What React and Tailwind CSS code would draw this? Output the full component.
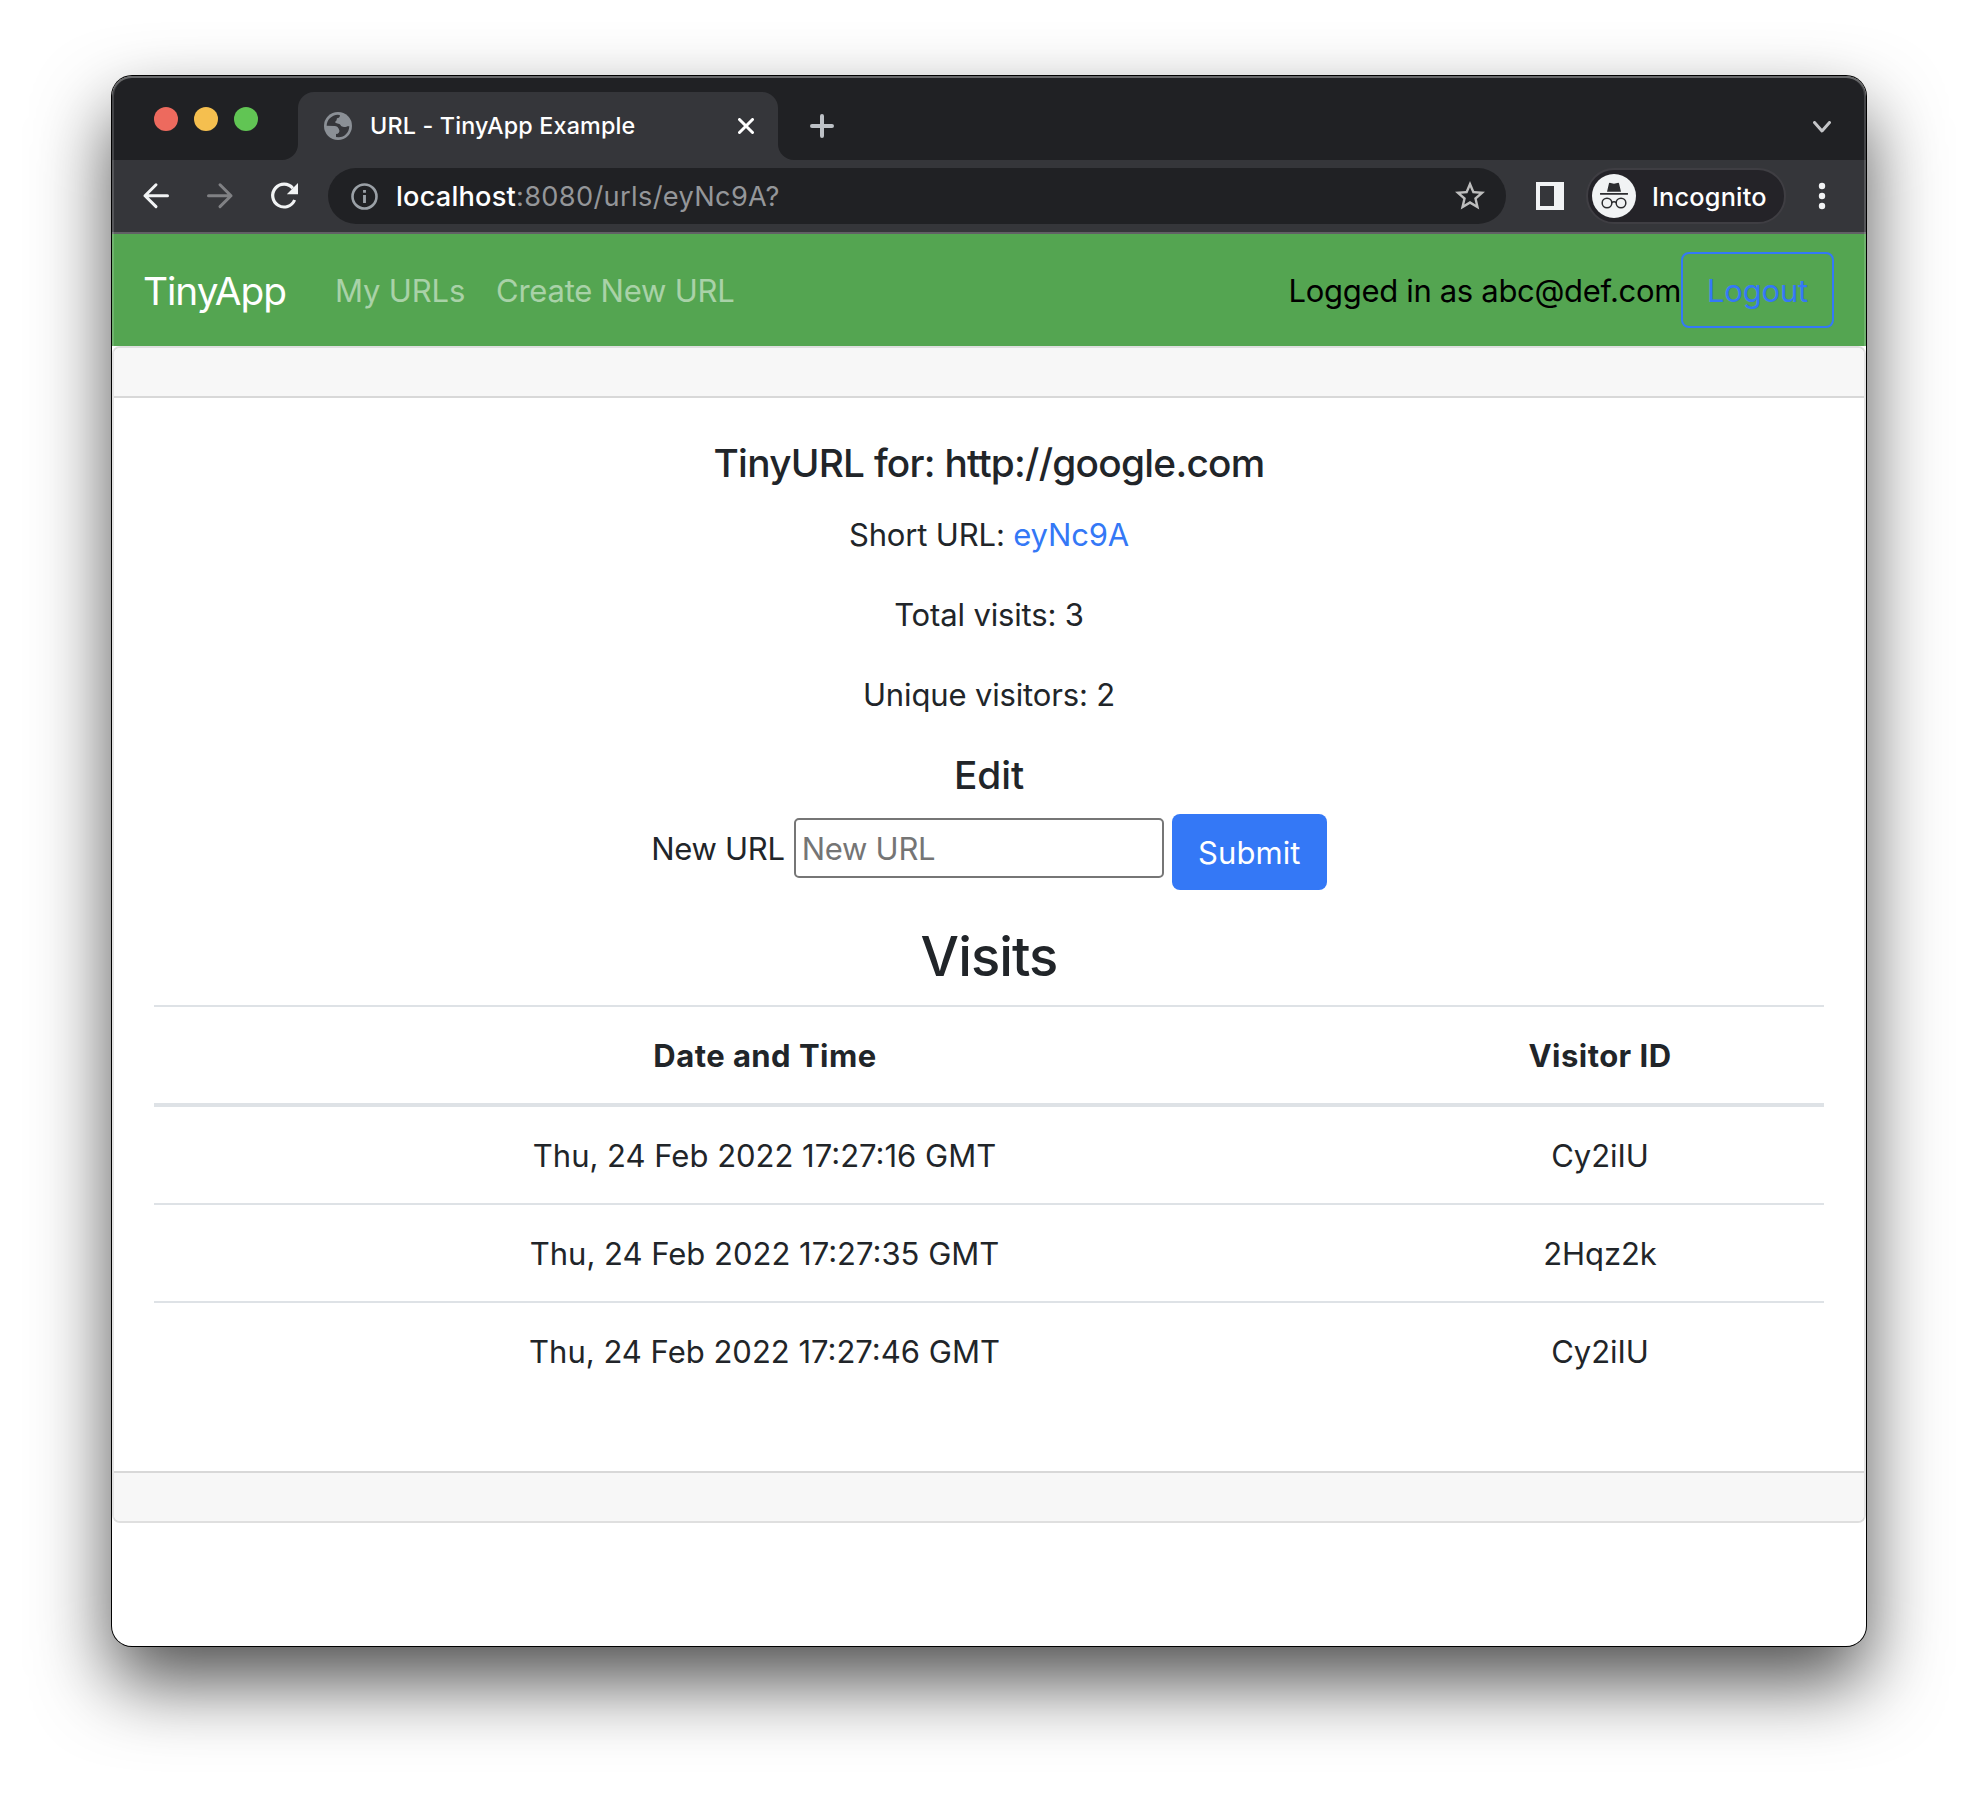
import React from 'react';
import { MdStarBorder } from 'react-icons/md';

const visits = [
  { time: 'Thu, 24 Feb 2022 17:27:16 GMT', id: 'Cy2iIU' },
  { time: 'Thu, 24 Feb 2022 17:27:35 GMT', id: '2Hqz2k' },
  { time: 'Thu, 24 Feb 2022 17:27:46 GMT', id: 'Cy2iIU' },
];

function GlobeIcon() {
  return (
    <svg width="28" height="28" viewBox="0 0 84 84" className="shrink-0">
      <circle cx="42" cy="42" r="42" fill="#8b9096" />
      <path
        d="M8 41C8 24 22 9 42 8L48 10C48 16 44 18 39 19C37 22 40 25 35 28C31 32 36 34 43 35C51 36 49 43 57 44C65 47 69 41 76 43C75 62 62 76 44 76L36 75V66C44 66 47 61 46 55C44 46 38 42 32 42Z"
        fill="#35363a"
      />
    </svg>
  );
}

function TabStrip() {
  return (
    <div className="flex h-[84px] bg-[#202124] pl-[42px] pr-[35px]">
      <div className="mt-[31px] flex gap-4">
        <span className="size-6 rounded-full bg-[#ed6a5e]" />
        <span className="size-6 rounded-full bg-[#f5bf4f]" />
        <span className="size-6 rounded-full bg-[#61c554]" />
      </div>
      <div className="relative ml-10 mt-4 flex h-[68px] w-[480px] items-center rounded-t-2xl bg-[#35363a] pl-[26px] pr-6">
        <svg className="absolute bottom-0 -left-4" width="16" height="16" fill="#35363a">
          <path d="M16 0V16H0A16 16 0 0 0 16 0Z" />
        </svg>
        <svg className="absolute bottom-0 -right-4" width="16" height="16" fill="#35363a">
          <path d="M0 0V16H16A16 16 0 0 1 0 0Z" />
        </svg>
        <GlobeIcon />
        <span className="ml-[18px] flex-1 whitespace-nowrap text-[23.3px] font-medium leading-[28px] tracking-[0.18px] text-white">
          URL - TinyApp Example
        </span>
        <svg width="16" height="16" viewBox="0 0 16 16" stroke="#fff" strokeWidth="3" strokeLinecap="round">
          <path d="M1.5 1.5L14.5 14.5M14.5 1.5L1.5 14.5" />
        </svg>
      </div>
      <div className="mt-4 flex h-[68px] flex-1 items-center justify-between pl-8">
        <svg width="24" height="24" viewBox="0 0 24 24" stroke="#bdc1c6" strokeWidth="4" strokeLinecap="round">
          <path d="M2 12H22M12 2V22" />
        </svg>
        <svg width="18" height="12" viewBox="0 0 18 12" fill="none" stroke="#c4c5c8" strokeWidth="3" strokeLinecap="round" strokeLinejoin="round" className="mt-0.5">
          <path d="M1.5 1.5L9 10L16.5 1.5" />
        </svg>
      </div>
    </div>
  );
}

function IncognitoIcon() {
  return (
    <svg width="44" height="44" viewBox="0 0 132 132">
      <circle cx="66" cy="66" r="66" fill="#f1f3f4" />
      <g fill="#2c2d30">
        <path d="M45 53L51 28Q52 25 56 27L66 29L76 27Q80 25 81 28L87 53Z" />
        <rect x="24" y="57" width="84" height="5" rx="1" />
      </g>
      <g fill="none" stroke="#2c2d30" strokeWidth="4.5">
        <circle cx="45" cy="87" r="14.5" />
        <circle cx="87" cy="87" r="14.5" />
        <path d="M59 86Q66 80 73 86" />
      </g>
    </svg>
  );
}

function Toolbar() {
  return (
    <div className="flex h-[74px] items-center border-b-2 border-[#616065] bg-[#35363a] pl-7">
      <div className="flex gap-8">
        <svg width="32" height="32" viewBox="0 0 32 32" fill="none" stroke="#f1f3f4" strokeWidth="3" strokeLinecap="round" strokeLinejoin="round">
          <path d="M27.5 15.7H5M16 4.8L5 15.7L16 26.6" />
        </svg>
        <svg width="32" height="32" viewBox="0 0 32 32" fill="none" stroke="#808184" strokeWidth="3" strokeLinecap="round" strokeLinejoin="round">
          <path d="M4.5 15.7H27M16 4.8L27 15.7L16 26.6" />
        </svg>
        <svg width="32" height="32" viewBox="0 0 32 32" fill="none">
          <path d="M24.8 8.2A11.4 11.4 0 1 0 26.6 20" stroke="#f1f3f4" strokeWidth="3.2" />
          <path d="M30 3V14.2H18.8Z" fill="#f1f3f4" />
        </svg>
      </div>
      <div className="ml-7 flex h-14 w-[1178px] items-center rounded-full bg-[#202124] pl-[23px] pr-[18px]">
        <svg width="27" height="27" viewBox="0 0 27 27" fill="none" stroke="#9aa0a6" className="shrink-0">
          <circle cx="13.5" cy="13.5" r="12" strokeWidth="2.6" />
          <path d="M13.5 12V20M13.5 7V9.8" strokeWidth="2.9" />
        </svg>
        <span className="ml-[18px] flex-1 whitespace-nowrap pt-0.5 text-[27.2px] leading-8 tracking-[0.34px] text-[#949699]">
          <span className="font-medium tracking-[0.2px] text-white">localhost</span>:8080/urls/eyNc9A?
        </span>
        <MdStarBorder size={36} color="#bdbdbd" />
      </div>
      <svg className="ml-[30px]" width="28" height="28" viewBox="0 0 28 28">
        <path fillRule="evenodd" d="M0 0H28V28H0ZM4 4V24H18V4Z" fill="#f1f3f4" />
      </svg>
      <div className="ml-[22px] flex h-14 w-[200px] items-center rounded-full border-2 border-[#3f3e43] bg-[#242328] pl-1">
        <IncognitoIcon />
        <span className="ml-[16px] pt-0.5 text-[25.3px] font-medium leading-8 tracking-[0.2px] text-white">Incognito</span>
      </div>
      <svg className="ml-7" width="16" height="28" viewBox="0 0 16 28" fill="#f1f3f4">
        <circle cx="8" cy="4" r="3.2" />
        <circle cx="8" cy="14" r="3.2" />
        <circle cx="8" cy="24" r="3.2" />
      </svg>
    </div>
  );
}

function Navbar() {
  return (
    <nav className="flex h-28 items-center bg-[#54a551] px-8 text-[31px] leading-[48px]">
      <a className="-ml-px w-[191px] pt-0.5 text-[38.8px] leading-[60px] tracking-[-1.04px] text-white">TinyApp</a>
      <a className="w-[162px] pt-0.5 pl-px tracking-[-0.15px] text-white/50">My URLs</a>
      <a className="pt-0.5 tracking-[-0.23px] text-white/50">Create New URL</a>
      <span className="ml-auto pt-0.5 tracking-[-0.32px] text-black">Logged in as abc@def.com</span>
      <button className="h-[76px] w-[153px] rounded-lg border-2 border-[#3478f6] pt-0.5 tracking-[-0.2px] text-[#3478f6]">
        Logout
      </button>
    </nav>
  );
}

function UrlCard() {
  return (
    <section className="overflow-hidden rounded-lg border-2 border-[#dfdfdf] bg-white">
      <div className="h-[50px] border-b-2 border-[#d8d8d8] bg-[#f7f7f7]" />
      <div className="h-[1073px] px-10 pt-[41px] text-center text-[31px] leading-[48px] tracking-[-0.15px]">
        <h5 className="mb-6 text-[38.8px] font-medium tracking-[-0.74px]">TinyURL for: http://google.com</h5>
        <p className="mb-8">
          Short URL: <a className="text-[#3478f6]">eyNc9A</a>
        </p>
        <p className="mb-8">Total visits: 3</p>
        <p className="mb-8">Unique visitors: 2</p>
        <h5 className="mb-[15px] text-[38.8px] font-medium tracking-[-0.05px]">Edit</h5>
        <form className="mb-[33px] flex items-start justify-center">
          <label className="mr-[9px] mt-[11px] tracking-[-0.28px]">New URL</label>
          <input
            placeholder="New URL"
            className="mr-2 mt-1 h-[60px] w-[370px] rounded-[5px] border-2 border-[#767676] px-[6px] tracking-[-0.28px] placeholder:text-[#757575]"
          />
          <button type="button" className="h-[76px] w-[155px] rounded-lg bg-[#3478f6] pt-0.5 tracking-[0.05px] text-white">
            Submit
          </button>
        </form>
        <h3 className="mb-[15px] text-[54.3px] font-medium leading-[67px] tracking-[-0.92px]">Visits</h3>
        <table className="w-full table-fixed border-separate border-spacing-0">
          <colgroup>
            <col className="w-[1220px]" />
            <col />
          </colgroup>
          <thead>
            <tr className="font-bold tracking-[0.46px]">
              <th className="border-t-2 border-b-4 border-[#dee2e6] pt-[25px] pb-[23px] pl-0.5">Date and Time</th>
              <th className="border-t-2 border-b-4 border-[#dee2e6] pt-[25px] pb-[23px] pl-0.5">Visitor ID</th>
            </tr>
          </thead>
          <tbody className="tracking-normal">
            {visits.map((v, i) => (
              <tr key={v.time} className={i === 0 ? '' : '[&>td]:border-t-2'}>
                <td className="border-[#dee2e6] pt-[25px] pb-[23px] pl-px">{v.time}</td>
                <td className="border-[#dee2e6] pt-[25px] pb-[23px] pl-0.5 tracking-[-0.08px]">{v.id}</td>
              </tr>
            ))}
          </tbody>
        </table>
      </div>
      <div className="h-[50px] border-t-2 border-[#d8d8d8] bg-[#f7f7f7]" />
    </section>
  );
}

export default function App() {
  return (
    <div className="h-[1794px] w-[1978px] overflow-hidden bg-white pl-[112px] pt-[76px] font-['Inter','Liberation_Sans',sans-serif] text-[#212529]">
      <div className="relative h-[1570px] w-[1754px] overflow-hidden rounded-[20px] bg-white shadow-[0_0_0_1px_#000,0_36px_76px_rgba(0,0,0,0.69)]">
        <TabStrip />
        <Toolbar />
        <Navbar />
        <UrlCard />
        <div className="pointer-events-none absolute inset-0 rounded-[20px] shadow-[inset_0_0_0_2px_rgba(255,255,255,0.16),inset_0_2px_0_rgba(255,255,255,0.2)]" />
      </div>
    </div>
  );
}
